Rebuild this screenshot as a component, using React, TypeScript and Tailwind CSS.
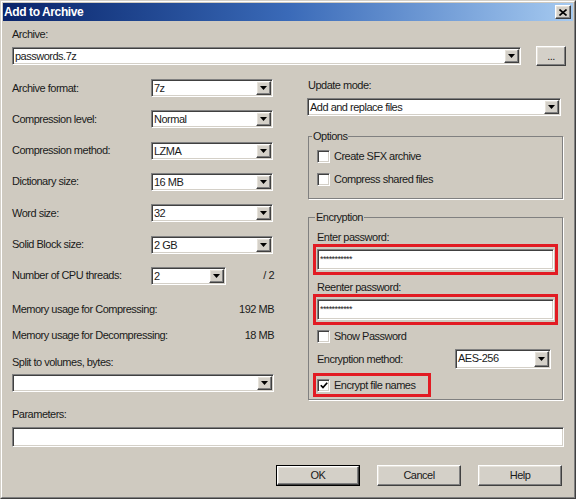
import type { ReactNode } from 'react'

const sunken =
  'border border-t-[#808080] border-l-[#808080] border-b-white border-r-white shadow-[inset_1px_1px_0_#404040,inset_-1px_-1px_0_#d4d0c8]'
const raised =
  'border border-t-white border-l-white border-b-[#404040] border-r-[#404040] shadow-[inset_-1px_-1px_0_#808080,inset_1px_1px_0_#e6e2da]'

function Arrow() {
  return (
    <svg width="7" height="4" viewBox="0 0 7 4">
      <path d="M0 0h7L3.5 4z" fill="#000" />
    </svg>
  )
}

function Combo({ value = '', className = '' }: { value?: string; className?: string }) {
  return (
    <div className={`flex h-[18px] items-stretch bg-white ${sunken} ${className}`}>
      <span className="flex-1 truncate pl-[2px] leading-[16px]">{value}</span>
      <span className={`my-[1px] mr-[1px] flex w-[15px] items-center justify-center bg-[#d4d0c8] ${raised}`}>
        <Arrow />
      </span>
    </div>
  )
}

function Check({ checked = false, label }: { checked?: boolean; label: string }) {
  return (
    <div className="flex h-[13px] items-center">
      <span className={`flex h-[13px] w-[13px] shrink-0 items-center justify-center bg-white ${sunken}`}>
        {checked && (
          <svg width="8" height="7" viewBox="0 0 8 7">
            <path d="M0.8 3.2l2.2 2.4L7.2 0.8" stroke="#000" strokeWidth="1.7" fill="none" />
          </svg>
        )}
      </span>
      <span className="ml-[4px]">{label}</span>
    </div>
  )
}

function Row({ label, children }: { label: string; children: ReactNode }) {
  return (
    <div className="flex h-[18px] items-center">
      <span className="w-[139px] shrink-0">{label}</span>
      {children}
    </div>
  )
}

function PasswordBox() {
  return (
    <div className="ml-[4px] w-[245px] border-[3px] border-[#e21b23] px-[1px] py-[2px]">
      <div className={`flex h-[21px] items-center bg-white pl-[2px] text-[9px] tracking-[-0.6px] ${sunken}`}>***********</div>
    </div>
  )
}

function Button({ label, primary = false }: { label: string; primary?: boolean }) {
  const inner = (
    <div className={`flex h-full w-full items-center justify-center bg-[#d4d0c8] ${raised}`}>{label}</div>
  )
  if (primary) return <div className="h-[21px] w-[84px] border border-black">{inner}</div>
  return <div className="h-[21px] w-[84px]">{inner}</div>
}

export default function App() {
  return (
    <div className="h-[499px] w-[576px] overflow-hidden border border-t-[#d4d0c8] border-l-[#d4d0c8] border-b-[#404040] border-r-[#404040] bg-[#cfcac0] font-['Liberation_Sans',Arial,sans-serif] text-[11px] leading-[13px] tracking-[-0.5px] text-[#1a1a1a]">
      <div className="h-full w-full border border-t-white border-l-white border-b-[#808080] border-r-[#808080] p-[1px]">
        {/* title bar */}
        <div className="flex h-[18px] items-center justify-between bg-linear-to-r from-[#0a246a] via-[#3a6ab8] to-[#a6caf0] pl-[1px]">
          <span className="text-[12px] font-bold tracking-[-0.4px] text-white">Add to Archive</span>
          <span className={`mr-[2px] flex h-[14px] w-[16px] items-center justify-center bg-[#d4d0c8] ${raised}`}>
            <svg width="8" height="7" viewBox="0 0 8 7">
              <path d="M0.5 0.5l7 6M7.5 0.5l-7 6" stroke="#000" strokeWidth="1.6" />
            </svg>
          </span>
        </div>

        <div className="px-[9px]">
          <div className="mt-[7px]">Archive:</div>
          <div className="mt-[5px] flex h-[20px] items-center justify-between">
            <Combo value="passwords.7z" className="w-[509px]" />
            <div className={`mr-[-2px] flex h-[20px] w-[30px] items-center justify-center bg-[#d4d0c8] ${raised}`}>...</div>
          </div>

          <div className="mt-[13px] flex gap-[33px]">
            {/* left column */}
            <div className="flex w-[262px] flex-col">
              <div className="flex flex-col gap-[13.33px]">
                <Row label="Archive format:">
                  <Combo value="7z" className="w-[122px]" />
                </Row>
                <Row label="Compression level:">
                  <Combo value="Normal" className="w-[122px]" />
                </Row>
                <Row label="Compression method:">
                  <Combo value="LZMA" className="w-[122px]" />
                </Row>
                <Row label="Dictionary size:">
                  <Combo value="16 MB" className="w-[122px]" />
                </Row>
                <Row label="Word size:">
                  <Combo value="32" className="w-[122px]" />
                </Row>
                <Row label="Solid Block size:">
                  <Combo value="2 GB" className="w-[122px]" />
                </Row>
                <Row label="Number of CPU threads:">
                  <Combo value="2" className="w-[75px]" />
                  <span className="flex-1 text-right">/ 2</span>
                </Row>
              </div>
              <div className="mt-[18px] flex justify-between">
                <span>Memory usage for Compressing:</span>
                <span>192 MB</span>
              </div>
              <div className="mt-[13px] flex justify-between">
                <span>Memory usage for Decompressing:</span>
                <span>18 MB</span>
              </div>
              <div className="mt-[14px]">Split to volumes, bytes:</div>
              <Combo className="mt-[5px] w-[262px]" />
            </div>

            {/* right column */}
            <div className="flex w-[256px] flex-col">
              <div className="pl-[1px]">Update mode:</div>
              <Combo value="Add and replace files" className="mt-[6px] w-[254px]" />

              <fieldset className="mt-[14px] ml-[1px] w-[255px] border border-[#808080] pb-[12px] shadow-[1px_1px_0_#fff]">
                <legend className="ml-[3px] px-[1px]">Options</legend>
                <div className="mt-[7px] ml-[8px] flex flex-col gap-[10px]">
                  <Check label="Create SFX archive" />
                  <Check label="Compress shared files" />
                </div>
              </fieldset>

              <fieldset className="mt-[12px] ml-[1px] w-[255px] border border-[#808080] pb-[2px] shadow-[1px_1px_0_#fff]">
                <legend className="ml-[6px] px-[1px]">Encryption</legend>
                <div className="mt-[7px] ml-[8px]">Enter password:</div>
                <PasswordBox />
                <div className="mt-[6px] ml-[8px]">Reenter password:</div>
                <PasswordBox />
                <div className="mt-[5px] ml-[8px]">
                  <Check label="Show Password" />
                </div>
                <div className="mt-[6px] ml-[8px] mr-[11px] flex h-[20px] items-center justify-between">
                  <span>Encryption method:</span>
                  <Combo value="AES-256" className="h-[20px] w-[96px]" />
                </div>
                <div className="mt-[4px] ml-[4px] flex h-[24px] w-[118px] items-center border-[3px] border-[#e21b23] pl-[1px]">
                  <Check checked label="Encrypt file names" />
                </div>
              </fieldset>
            </div>
          </div>

          <div className="mt-[8px]">Parameters:</div>
          <div className={`mt-[6px] h-[20px] w-[552px] bg-white ${sunken}`} />

          <div className="mt-[18px] mr-[2px] flex justify-end gap-[17px]">
            <Button label="OK" primary />
            <Button label="Cancel" />
            <Button label="Help" />
          </div>
        </div>
      </div>
    </div>
  )
}
